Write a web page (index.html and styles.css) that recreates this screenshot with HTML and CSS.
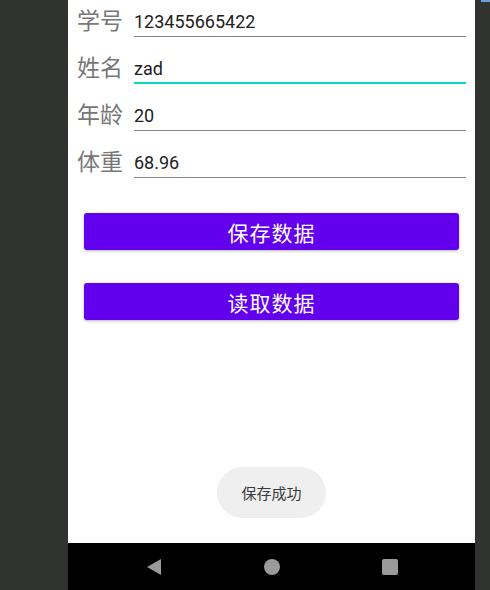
FILE: index.html
```html
<!DOCTYPE html>
<html>
<head>
<meta charset="utf-8">
<link rel="stylesheet" href="styles.css">
</head>
<body>
<div class="desk">
  <div class="side-left"></div>
  <div class="phone">
    <div class="screen">
      <div class="form">
        <div class="row">
          <div class="label">学号</div>
          <div class="field">123455665422</div>
        </div>
        <div class="row">
          <div class="label">姓名</div>
          <div class="field focused">zad</div>
        </div>
        <div class="row">
          <div class="label">年龄</div>
          <div class="field">20</div>
        </div>
        <div class="row">
          <div class="label">体重</div>
          <div class="field">68.96</div>
        </div>
      </div>
      <div class="buttons">
        <button class="btn">保存数据</button>
        <button class="btn">读取数据</button>
      </div>
      <div class="toast">保存成功</div>
    </div>
    <div class="navbar">
      <svg class="nav-icon" width="16" height="16" viewBox="0 0 16 16"><path d="M15 0 L15 16 L1 8 Z" fill="#9a9a9a"/></svg>
      <svg class="nav-icon" width="16" height="16" viewBox="0 0 16 16"><circle cx="8" cy="8" r="8" fill="#9a9a9a"/></svg>
      <svg class="nav-icon" width="16" height="16" viewBox="0 0 16 16"><rect x="0" y="0" width="16" height="16" rx="2" fill="#9a9a9a"/></svg>
    </div>
  </div>
  <div class="side-right"><div class="tab"></div></div>
</div>
</body>
</html>
```
FILE: styles.css
```css
* { box-sizing: border-box; }
html, body {
  margin: 0;
  padding: 0;
  width: 490px;
  height: 590px;
  overflow: hidden;
  background: #313331;
  font-family: Roboto, "Noto Sans CJK SC", sans-serif;
}
.desk {
  display: flex;
  height: 590px;
}
.side-left {
  width: 68px;
  background: #313331;
}
.side-right {
  width: 15px;
  background: #313331;
}
.tab {
  margin-left: 6px;
  height: 2px;
  background: #6c9fd6;
}
.phone {
  width: 407px;
  display: flex;
  flex-direction: column;
}
.screen {
  position: relative;
  height: 543px;
  background: #ffffff;
  overflow: hidden;
}
.form {
  margin-top: -10px;
  padding: 0 9px 0 9px;
}
.row {
  display: flex;
  align-items: flex-end;
  height: 47px;
}
.label {
  width: 57px;
  font-family: "Noto Sans CJK SC", sans-serif;
  font-size: 23px;
  line-height: 30px;
  color: #777777;
  padding-bottom: 3px;
}
.field {
  flex: 1;
  font-family: Roboto, sans-serif;
  font-size: 18px;
  line-height: 24px;
  color: #212121;
  padding-bottom: 2px;
  border-bottom: 1px solid #858585;
}
.field.focused {
  border-bottom: 2px solid #03dac5;
  padding-bottom: 1px;
}
.buttons {
  display: flex;
  flex-direction: column;
  gap: 33px;
  padding: 35px 16px 0 16px;
}
.btn {
  height: 37px;
  border: none;
  border-radius: 3px;
  background: #6200ee;
  color: #ffffff;
  font-family: "Noto Sans CJK SC", sans-serif;
  font-size: 21px;
  letter-spacing: 1px;
  box-shadow: 0 1px 3px rgba(0,0,0,0.3);
  padding: 0;
}
.toast {
  position: absolute;
  left: 149px;
  top: 467px;
  width: 109px;
  height: 51px;
  border-radius: 26px;
  background: #efefef;
  color: #3a3a3a;
  font-family: "Noto Sans CJK SC", sans-serif;
  font-size: 15px;
  display: flex;
  align-items: center;
  justify-content: center;
}
.navbar {
  height: 47px;
  background: #000000;
  display: flex;
  align-items: center;
  justify-content: center;
  gap: 102px;
}
.nav-icon {
  display: block;
}
```
